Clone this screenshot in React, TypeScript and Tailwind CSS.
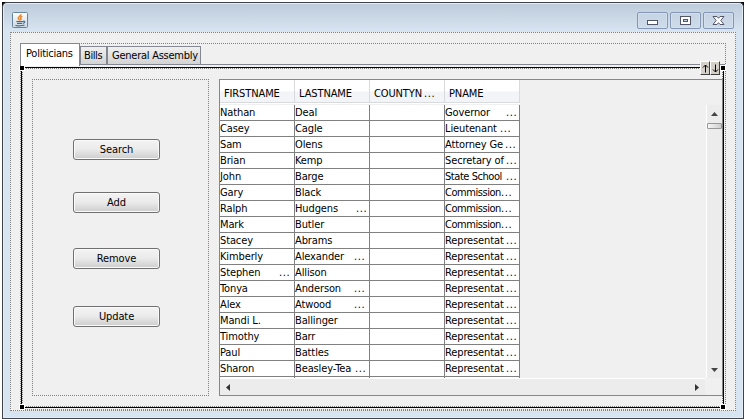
import React from "react";

type Cell = { text: string; dots?: number; tight?: boolean };
type Row = [Cell, Cell, Cell];

const c = (text: string, dots?: number, tight?: boolean): Cell => ({ text, dots, tight });

const rows: Row[] = [
  [c("Nathan"), c("Deal"), c("Governor", 61)],
  [c("Casey"), c("Cagle"), c("Lieutenant", 55)],
  [c("Sam"), c("Olens"), c("Attorney Ge", 60)],
  [c("Brian"), c("Kemp"), c("Secretary of", 61)],
  [c("John"), c("Barge"), c("State School", 61, true)],
  [c("Gary"), c("Black"), c("Commission", 56, true)],
  [c("Ralph"), c("Hudgens", 61), c("Commission", 56, true)],
  [c("Mark"), c("Butler"), c("Commission", 56, true)],
  [c("Stacey"), c("Abrams"), c("Representat", 61)],
  [c("Kimberly"), c("Alexander", 59), c("Representat", 61)],
  [c("Stephen", 59), c("Allison"), c("Representat", 61)],
  [c("Tonya"), c("Anderson", 59), c("Representat", 61)],
  [c("Alex"), c("Atwood", 59), c("Representat", 61)],
  [c("Mandi L."), c("Ballinger"), c("Representat", 61)],
  [c("Timothy"), c("Barr"), c("Representat", 61)],
  [c("Paul"), c("Battles"), c("Representat", 61)],
  [c("Sharon"), c("Beasley-Tea", 60), c("Representat", 61)],
];

function Label({ cell }: { cell: Cell }) {
  return (
    <span className="flex whitespace-pre">
      <span
        className={`shrink-0 ${cell.tight ? "tracking-[-0.45px]" : "tracking-[-0.12px]"}`}
        style={cell.dots ? { width: cell.dots } : undefined}
      >
        {cell.text}
      </span>
      {cell.dots ? <span className="tracking-[0.6px]">...</span> : null}
    </span>
  );
}

function DataCell({ cell }: { cell?: Cell }) {
  return (
    <div className="h-4 w-[75px] shrink-0 border-r border-b border-[#808080] bg-white leading-[15px]">
      {cell ? <Label cell={cell} /> : null}
    </div>
  );
}

function HeaderCell({ cell }: { cell: Cell }) {
  return (
    <div className="h-[23px] w-[75px] shrink-0 border-r border-b border-[#d8dadd] bg-linear-to-b from-white from-50% to-[#f2f4f7] to-55% pl-[4px] leading-[27px]">
      <Label cell={cell} />
    </div>
  );
}

function PushButton({ label, className }: { label: string; className: string }) {
  return (
    <button
      className={`block h-[21px] w-[87px] shrink-0 rounded-[3px] border border-[#707070] bg-linear-to-b from-[#f3f3f3] from-0% via-[#ebebeb] via-48% to-[#cdcdcd] text-center leading-[18px] tracking-[-0.1px] shadow-[inset_0_0_0_1px_#fafafa] ${className}`}
    >
      {label}
    </button>
  );
}

function CaptionButton({ kind }: { kind: "min" | "max" | "close" }) {
  return (
    <div className="flex h-[17px] w-[31px] items-center justify-center rounded-[2px] border border-[#8596b4] bg-linear-to-b from-[#c5d3e2] to-[#cddceb] shadow-[inset_0_0_0_1px_#d4e0ee]">
      <svg width="15" height="13" viewBox="0 0 15 13" fill="none" shapeRendering="crispEdges">
        {kind === "min" && <rect x="2.5" y="6.5" width="10" height="4" fill="#fff" stroke="#535666" />}
        {kind === "max" && (
          <>
            <rect x="2.5" y="2.5" width="10" height="8" fill="#fff" stroke="#535666" />
            <rect x="5.5" y="5.5" width="4" height="2" fill="#c6d4e5" stroke="#535666" />
          </>
        )}
        {kind === "close" && (
          <path
            shapeRendering="geometricPrecision"
            d="M2 2.500h4L7.500 4.300 9 2.500h4L9.800 6.500 13 10.500H9L7.500 8.700 6 10.500H2L5.200 6.500Z"
            fill="#fff"
            stroke="#535666"
          />
        )}
      </svg>
    </div>
  );
}

function JavaIcon() {
  return (
    <svg width="16" height="16" viewBox="0 0 16 16" fill="none">
      <defs>
        <linearGradient id="tile" x2="0" y2="1">
          <stop stopColor="#fff" />
          <stop offset="1" stopColor="#cbd7e2" />
        </linearGradient>
      </defs>
      <rect x="0.5" y="0.5" width="15" height="15" rx="1" fill="url(#tile)" stroke="#66859d" />
      <path d="M9 2.300C9 4 6 4.600 6.300 6.300C6.500 7.300 7.500 7.500 7.300 8.500M10.300 4.400C8.500 5 8.200 5.700 8.900 6.600C9.300 7.200 8.800 7.800 8.400 8.200" stroke="#ee8220" strokeWidth="1.500" />
      <path d="M4.300 9.500H11M5 11.300H10M11 9.300C13.500 8.800 13.200 11 10.700 11.300M3.500 13.200C5 14 10.500 14 12.500 13" stroke="#3f6c91" strokeWidth="1.200" />
    </svg>
  );
}

function Handle({ className }: { className: string }) {
  return <div className={`absolute size-[6px] border border-white bg-black ${className}`} />;
}

function Nudge({ d }: { d: string }) {
  return (
    <div className="flex h-[14px] w-[10px] items-center justify-center border-t border-r border-b border-l border-t-white border-r-[#404040] border-b-[#404040] border-l-white bg-[#d4d0c8]">
      <svg width="7" height="9" viewBox="0 0 7 9" fill="none" stroke="#000">
        <path d={d} />
      </svg>
    </div>
  );
}

export default function App() {
  return (
    <div className="h-[419px] w-[744px] cursor-default overflow-hidden bg-white pt-[2px] pl-[2px] font-['DejaVu_Sans_Condensed','DejaVu_Sans',sans-serif] text-[11px] text-black select-none [font-stretch:condensed]">
      <div className="h-[417px] w-[742px] bg-black">
        <div className="relative flex h-[417px] w-[742px] flex-col rounded-t-[5px] border border-[#3f4347] bg-[#d7e4f2] bg-linear-to-b from-[#bdcbda] from-0% to-[#d7e4f2] to-[28px] shadow-[inset_0_0_0_1px_#e4edf6]">
          <header className="flex h-[29px] shrink-0 items-start pt-[9px] pr-[9px] pl-[9px]">
            <JavaIcon />
            <div className="ml-auto flex gap-[2px]">
              <CaptionButton kind="min" />
              <CaptionButton kind="max" />
              <CaptionButton kind="close" />
            </div>
          </header>

          <main className="relative ml-[7px] h-[379px] w-[726px] border border-dotted border-[#808080] bg-[#f0f0f0] pt-[10px] pl-[9px]">
            <section className="h-[367px] w-[706px] border border-dotted border-[#808080]">
              <nav className="flex h-[21px] items-end border-b border-[#828790] bg-[#f0f0f0] whitespace-nowrap">
                <div className="relative z-10 -mb-[2px] -ml-px h-[23px] w-[60px] border border-b-0 border-[#828790] bg-white pl-[5px] leading-[20px] tracking-[-0.25px]">Politicians</div>
                <div className="h-[18px] w-[27px] border border-b-0 border-[#828790] bg-linear-to-b from-[#f0f0f0] to-[#d4d4d4] pl-[3px] leading-[18px] tracking-[-0.4px]">Bills</div>
                <div className="h-[18px] w-[94px] border border-b-0 border-[#828790] bg-linear-to-b from-[#f0f0f0] to-[#d4d4d4] pl-[4px] leading-[18px] tracking-[-0.25px]">General Assembly</div>
              </nav>

              <div className="flex pt-[14px] pl-[11px]">
                <aside className="flex h-[317px] w-[177px] flex-col items-start border border-dotted border-[#808080] pl-[40px]">
                  <PushButton label="Search" className="mt-[59px]" />
                  <PushButton label="Add" className="mt-[32px]" />
                  <PushButton label="Remove" className="mt-[35px]" />
                  <PushButton label="Update" className="mt-[37px]" />
                </aside>

                <div className="ml-[10px] h-[317px] w-[504px] border border-[#828790]">
                  <div className="flex h-[298px]">
                    <div className="w-[486px] overflow-hidden">
                      <div className="flex h-[24px] w-[300px] bg-white">
                        <HeaderCell cell={c("FIRSTNAME")} />
                        <HeaderCell cell={c("LASTNAME")} />
                        <HeaderCell cell={c("COUNTYN", 50)} />
                        <HeaderCell cell={c("PNAME")} />
                      </div>
                      {rows.map((row, i) => (
                        <div className={`flex ${i === 0 ? "pt-px" : ""}`} key={i}>
                          <DataCell cell={row[0]} />
                          <DataCell cell={row[1]} />
                          <DataCell />
                          <DataCell cell={row[2]} />
                        </div>
                      ))}
                      {/* top edge of the next row, cut off by the viewport */}
                      <div className="flex">
                        <DataCell />
                        <DataCell />
                        <DataCell />
                        <DataCell />
                      </div>
                    </div>
                    <div className="mt-[25px] flex h-[273px] w-[16px] flex-col items-center border-l border-white bg-[#ececec]">
                      <svg className="mt-[7px]" width="7" height="4" viewBox="0 0 7 4">
                        <path d="M0 4L3.500 0L7 4Z" fill="#444" />
                      </svg>
                      <div className="mt-[7px] h-[6px] w-[15px] rounded-[1px] border border-[#979797] bg-linear-to-r from-[#f5f5f5] to-[#cfcfcf]" />
                      <svg className="mt-auto mb-[6px]" width="7" height="4" viewBox="0 0 7 4">
                        <path d="M0 0L3.500 4L7 0Z" fill="#444" />
                      </svg>
                    </div>
                  </div>
                  <div className="flex h-[17px] w-[485px] items-center justify-between border-t border-white bg-[#ececec] pr-[6px] pl-[6px]">
                    <svg width="4" height="7" viewBox="0 0 4 7">
                      <path d="M4 0L0 3.500L4 7Z" fill="#333" />
                    </svg>
                    <svg width="4" height="7" viewBox="0 0 4 7">
                      <path d="M0 0L4 3.500L0 7Z" fill="#333" />
                    </svg>
                  </div>
                </div>
              </div>
            </section>

            {/* selection outline of the active tab's panel */}
            <div className="pointer-events-none absolute top-[34px] left-[10px] h-[341px] w-[703px] border border-black">
              <div className="h-full w-full border border-dotted border-[#808080]" />
              <Handle className="-top-[3px] -left-[3px]" />
              <Handle className="-top-[3px] -right-[3px]" />
              <Handle className="-bottom-[3px] -left-[3px]" />
              <Handle className="-right-[3px] -bottom-[3px]" />
            </div>
            <div className="absolute top-[28px] left-[689px] flex">
              <Nudge d="M3.500 8.500V1M1 3.500L3.500 1L6 3.500" />
              <Nudge d="M3.500 0.500V8M1 5.500L3.500 8L6 5.500" />
            </div>
          </main>
        </div>
      </div>
    </div>
  );
}
